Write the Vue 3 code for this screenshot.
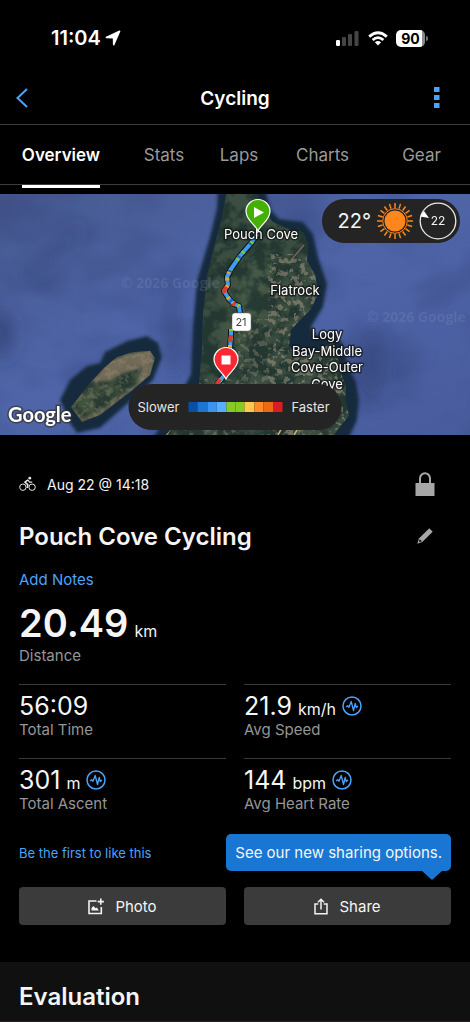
<script setup>
import { ref } from 'vue';

const tabs = ['Overview', 'Stats', 'Laps', 'Charts', 'Gear'];
const activeTab = ref('Overview');

const stats = [
  { value: '56:09', unit: '', label: 'Total Time', chart: false },
  { value: '21.9', unit: 'km/h', label: 'Avg Speed', chart: true },
  { value: '301', unit: 'm', label: 'Total Ascent', chart: true },
  { value: '144', unit: 'bpm', label: 'Avg Heart Rate', chart: true }
];

const paceClasses = ['p1', 'p2', 'p3', 'p4', 'p5', 'p5', 'p6', 'p7', 'p8', 'p9'];

const sunRays = Array.from({ length: 20 }, (_, i) => i * 18);

const routeNorth = 'M257 40 L252 48 L240 62 L231 75 L227 83 L228 91 L224 97 L229 105 L234 110 L239 112 L240 120';
const routeSouth = 'M231 135 L231 141 L230 155 L228 178 L222 184 L216 192';
</script>

<template>
  <div class="screen">
    <div class="status">
      <div class="clock">
        <span>11:04</span>
        <svg width="16" height="16" viewBox="0 0 16 16"><path d="M14.6 1.3 L8.7 14.6 L8.6 7.6 L1.4 7.4 Z" fill="#fff" stroke="#fff" stroke-width="1.6" stroke-linejoin="round" /></svg>
      </div>
      <div class="signals">
        <svg width="24" height="16" viewBox="0 0 24 16">
          <rect x="0" y="10" width="4" height="6" rx="1.3" fill="#fff" />
          <rect x="6" y="7" width="4" height="9" rx="1.3" fill="#454545" />
          <rect x="12" y="4" width="4" height="12" rx="1.3" fill="#454545" />
          <rect x="18.5" y="1" width="4" height="15" rx="1.3" fill="#454545" />
        </svg>
        <svg width="20" height="15" viewBox="0 0 20 15">
          <path d="M1.2 5.6 Q10 -2.2 18.8 5.6" fill="none" stroke="#fff" stroke-width="2.8" />
          <path d="M4.6 9 Q10 4.4 15.4 9" fill="none" stroke="#fff" stroke-width="2.7" />
          <path d="M6.9 11.3 Q10 8.8 13.1 11.3 L10 14.6 Z" fill="#fff" />
        </svg>
        <div class="battery"><span>90</span><i></i></div>
      </div>
    </div>

    <header class="header">
      <button class="icon-btn back" aria-label="Back">
        <svg width="12" height="20" viewBox="0 0 12 20"><path d="M11 1 L1.5 10 L11 19" fill="none" stroke="#4ba3fb" stroke-width="2" /></svg>
      </button>
      <h1>Cycling</h1>
      <button class="icon-btn more" aria-label="More options">
        <svg width="6" height="22" viewBox="0 0 6 22" fill="#4ba3fb">
          <rect x="0" y="0" width="5.5" height="5" />
          <rect x="0" y="8" width="5.5" height="5" />
          <rect x="0" y="16" width="5.5" height="5" />
        </svg>
      </button>
    </header>

    <nav class="tabs">
      <button
        v-for="tab in tabs"
        :key="tab"
        :class="{ active: tab === activeTab }"
        @click="activeTab = tab"
      ><span>{{ tab }}</span></button>
    </nav>

    <section class="map">
      <svg class="map-canvas" viewBox="0 0 470 241" preserveAspectRatio="xMidYMid slice">
        <defs>
          <linearGradient id="sea" x1="0" y1="0" x2="1" y2="1">
            <stop offset="0" stop-color="#46598f" />
            <stop offset=".45" stop-color="#4f65a8" />
            <stop offset="1" stop-color="#485c9d" />
          </linearGradient>
          <filter id="soft" x="-20%" y="-20%" width="140%" height="140%"><feGaussianBlur stdDeviation="1.6" /></filter>
          <filter id="softer" x="-40%" y="-40%" width="180%" height="180%"><feGaussianBlur stdDeviation="9" /></filter>
          <filter id="swell" x="0" y="0" width="100%" height="100%" color-interpolation-filters="sRGB">
            <feTurbulence type="fractalNoise" baseFrequency=".012 .02" numOctaves="3" seed="4" />
            <feColorMatrix values="0 0 0 0 .2  0 0 0 0 .26  0 0 0 0 .47  2 0 0 0 -.8" />
          </filter>
          <filter id="ground" x="0" y="0" width="100%" height="100%" color-interpolation-filters="sRGB">
            <feTurbulence type="fractalNoise" baseFrequency=".06" numOctaves="5" seed="8" />
            <feColorMatrix values="0 0 0 0 .1  0 0 0 0 .18  0 0 0 0 .17  5 0 0 0 -2" />
          </filter>
          <filter id="towns" x="0" y="0" width="100%" height="100%" color-interpolation-filters="sRGB">
            <feTurbulence type="fractalNoise" baseFrequency=".17" numOctaves="4" seed="21" />
            <feColorMatrix values="0 0 0 0 .66  0 0 0 0 .6  0 0 0 0 .52  0 9 0 0 -4.7" />
          </filter>
          <clipPath id="mainland">
            <path d="M226 0 L257 0 L262 14 L273 28 L291 36 L303 38 L308 50 L307 67 L315 80 L318 100 L311 115 L300 126 L291 136 L289 152 L297 163 L313 160 L333 148 L338 160 L340 177 L346 193 L345 206 L349 221 L340 233 L334 241 L166 241 L172 234 L188 204 L199 190 L202 155 L203 120 L207 82 L215 50 L222 24 Z" />
          </clipPath>
          <clipPath id="island">
            <path d="M71 213 L90 189 L105 173 L117 163 L133 158 L150 157 L155 164 L150 181 L130 198 L100 221 L82 228 L77 221 Z" />
          </clipPath>
        </defs>

        <rect width="470" height="241" fill="url(#sea)" />
        <rect width="470" height="241" filter="url(#swell)" opacity=".5" />
        <g filter="url(#softer)" fill="#2d3c70">
          <ellipse cx="172" cy="133" rx="8" ry="45" opacity=".5" />
          <ellipse cx="2" cy="140" rx="10" ry="24" opacity=".7" />
          <ellipse cx="50" cy="60" rx="42" ry="9" opacity=".4" transform="rotate(-40 50 60)" />
          <ellipse cx="372" cy="170" rx="12" ry="40" opacity=".4" />
        </g>

        <g filter="url(#soft)" fill="#122c3d">
          <path d="M218 -8 L264 -8 L271 16 L279 25 L303 28 L313 40 L318 63 L327 90 L323 113 L311 133 L315 141 L332 138 L343 150 L348 172 L356 188 L359 206 L357 226 L346 250 L150 250 L172 212 L187 188 L191 180 L193 133 L197 87 L210 43 L217 14 Z" />
          <path d="M60 206 L70 186 L87 172 L100 169 L105 158 L127 147 L147 142 L158 149 L162 163 L153 186 L128 209 L100 234 L77 239 L70 229 Z" />
        </g>

        <g clip-path="url(#mainland)">
          <rect x="150" width="220" height="241" fill="#3b4e41" />
          <ellipse cx="250" cy="105" rx="20" ry="55" fill="#50644c" opacity=".6" filter="url(#softer)" transform="rotate(25 250 105)" />
          <rect x="150" width="220" height="241" filter="url(#ground)" opacity=".7" />
          <rect x="268" y="60" width="90" height="181" filter="url(#towns)" opacity=".5" />
          <rect x="238" y="125" width="30" height="116" filter="url(#towns)" opacity=".35" />
          <rect x="150" y="185" width="88" height="56" filter="url(#towns)" opacity=".35" />
          <path d="M291 66 L304 51" stroke="#a5726a" stroke-width="1.5" opacity=".7" />
          <path d="M166 241 L180 222 M278 241 L285 228 M294 241 L302 228" stroke="#d6b568" stroke-width="1.5" />
        </g>
        <g clip-path="url(#island)">
          <rect x="60" y="140" width="110" height="100" fill="#41523e" />
          <rect x="60" y="140" width="110" height="100" filter="url(#ground)" opacity=".6" />
          <path d="M92 188 L110 166 L153 155 L154 180 L134 197 L142 174 L122 180 L108 187 Z" fill="#877764" opacity=".75" filter="url(#soft)" />
          <path d="M71 216 L82 226 L100 219 L135 193" fill="none" stroke="#81745e" stroke-width="4" opacity=".6" filter="url(#soft)" />
          <rect x="60" y="140" width="110" height="100" filter="url(#towns)" opacity=".25" />
        </g>

        <g class="watermark">
          <text x="121" y="94">© 2026 Google</text>
          <text x="367" y="128">© 2026 Google</text>
        </g>

        <g v-for="route in [routeNorth, routeSouth]" :key="route" fill="none" stroke-linejoin="round">
          <path :d="route" stroke="#101010" stroke-width="6" />
          <path :d="route" stroke="#3f9cf2" stroke-width="4" />
          <path :d="route" stroke="#83cc27" stroke-width="4" stroke-dasharray="2 7 2 11" />
          <path :d="route" stroke="#1566c0" stroke-width="4" stroke-dasharray="2 15" stroke-dashoffset="6" />
        </g>
        <g fill="none" stroke-width="4">
          <path d="M229 78 L227 83 L228 91 L224 97 L229 105 L234 110 L239 112" stroke="#f2a02c" stroke-dasharray="2 5" />
          <path d="M226 93 L224 97 L225 99 M233 109 L235 111 M231 141 L230 148 M220 185 L216 192" stroke="#e3362c" />
          <path d="M230 151 L229 168" stroke="#f5a43a" stroke-dasharray="2 4" />
        </g>

        <g class="place">
          <text x="261" y="45">Pouch Cove</text>
          <text x="295" y="101">Flatrock</text>
          <text x="327" y="145">Logy</text>
          <text x="327" y="162">Bay-Middle</text>
          <text x="327" y="178">Cove-Outer</text>
          <text x="327" y="195">Cove</text>
        </g>

        <rect x="232" y="119" width="19" height="18" rx="3" fill="#fff" stroke="#777" stroke-width=".5" />
        <text class="shield" x="241" y="132">21</text>

        <g stroke="#fff" stroke-width="1.2">
          <path d="M258 37 C255 30 246 26 246 17.5 A12 12 0 0 1 270 17.5 C270 26 261 30 258 37 Z" fill="#43b002" />
          <path d="M226 185 C223 178 214 174 214 165.5 A12 12 0 0 1 238 165.5 C238 174 229 178 226 185 Z" fill="#fb2731" />
        </g>
        <path d="M254 13 L264 18.5 L254 24 Z" fill="#fff" />
        <rect x="221.5" y="161.5" width="9" height="9" fill="#fff" />

        <text class="google" x="8" y="228">Google</text>
      </svg>

      <div class="weather">
        <span class="temp">22°</span>
        <svg width="38" height="38" viewBox="-19 -19 38 38">
          <circle r="10.5" fill="#ff861c" />
          <circle r="12.3" fill="none" stroke="#ff861c" stroke-width="1" />
          <path v-for="a in sunRays" :key="a" d="M0 -13 V-18" stroke="#ff861c" stroke-width="1.5" :transform="`rotate(${a})`" />
        </svg>
        <svg width="38" height="38" viewBox="-19 -19 38 38">
          <circle r="17.8" fill="none" stroke="#e8e8e8" stroke-width="1.3" />
          <path d="M-14 -10 L-9 -3 L-18 -4.5 Z" fill="#fff" />
          <text class="wind" x="0" y="4">22</text>
        </svg>
      </div>

      <div class="legend">
        <span>Slower</span>
        <div class="pace"><i v-for="(p, i) in paceClasses" :key="i" :class="p"></i></div>
        <span>Faster</span>
      </div>
    </section>

    <main class="content">
      <div class="date-row">
        <svg width="17" height="16" viewBox="0 0 17 16" fill="none" stroke="#e8e8e8">
          <circle cx="3.9" cy="11.2" r="3.2" stroke-width="1" />
          <circle cx="13.1" cy="11.2" r="3.2" stroke-width="1" />
          <circle cx="10.8" cy="2.2" r="1.4" fill="#e8e8e8" stroke="none" />
          <path d="M9.1 3.8 L5.9 6.2 L8.8 8.6 L8.3 12" stroke-width="1.5" stroke-linejoin="round" />
          <path d="M9 4 L10.5 6.1 H13.2" stroke-width="1.2" />
        </svg>
        <span>Aug 22 @ 14:18</span>
        <button class="icon-btn push" aria-label="Privacy">
          <svg width="20" height="24" viewBox="0 0 20 24"><path d="M5 11 V6.5 A5 5.3 0 0 1 15 6.5 V11" fill="none" stroke="#a6a6a6" stroke-width="2" /><rect x=".5" y="11" width="19" height="13" fill="#a6a6a6" /></svg>
        </button>
      </div>

      <div class="title-row">
        <h2>Pouch Cove Cycling</h2>
        <button class="icon-btn push pencil" aria-label="Edit name">
          <svg width="16" height="16" viewBox="0 0 16 16"><path d="M12.3 .3 L15.7 3.8 L5.3 14 L.3 15.7 L1.9 10.6 Z" fill="#a6a6a6" /><path d="M2.8 11.2 L4.9 13.2 L2.7 14 L2 13.3 Z" fill="#000" /></svg>
        </button>
      </div>

      <a class="notes" href="#">Add Notes</a>

      <div class="distance"><strong>20.49</strong><span>km</span></div>
      <div class="label">Distance</div>

      <div class="stats">
        <div v-for="s in stats" :key="s.label" class="stat">
          <div class="reading">
            <span class="value">{{ s.value }}</span>
            <span v-if="s.unit" class="unit">{{ s.unit }}</span>
            <button v-if="s.chart" class="icon-btn" :aria-label="s.label + ' chart'">
              <svg width="20" height="20" viewBox="0 0 20 20" fill="none" stroke="#4ba3fb"><circle cx="10" cy="10" r="9" stroke-width="1.5" /><path d="M4 11 L5.7 9.7 L7 11.2 L9.2 5.5 L11.5 14.5 L13.2 7.5 L14.3 11.5 L16 10" stroke-width="1.3" stroke-linejoin="round" /></svg>
            </button>
          </div>
          <div class="label">{{ s.label }}</div>
        </div>
      </div>

      <div class="social">
        <a href="#">Be the first to like this</a>
        <div class="tooltip">See our new sharing options.</div>
      </div>

      <div class="actions">
        <button>
          <svg width="16" height="17" viewBox="0 0 16 17" fill="none" stroke="#f2f2f2"><path d="M8.5 3 H1 V15.5 H13.3 V9" stroke-width="1.6" /><path d="M12.8 .5 V6.7 M9.7 3.6 H15.9" stroke-width="1.6" /><path d="M3.5 12.5 V10 L5.5 8 L7.5 10.3 L9 9.5 L10.8 12.5 Z" fill="#f2f2f2" stroke="none" /></svg>
          <span>Photo</span>
        </button>
        <button>
          <svg width="14" height="17" viewBox="0 0 14 17" fill="none" stroke="#f2f2f2" stroke-width="1.5"><path d="M4.3 6 H1 V15.8 H13 V6 H9.7" /><path d="M7 11.5 V1.5 M3.9 4.3 L7 1.3 L10.1 4.3" /></svg>
          <span>Share</span>
        </button>
      </div>
    </main>

    <section class="evaluation">
      <h2>Evaluation</h2>
    </section>
  </div>
</template>

<style>
body {
  margin: 0;
  background: #000;
}
</style>

<style scoped>
.screen {
  min-height: 100vh;
  display: flex;
  flex-direction: column;
  background: #000;
  color: #f5f5f5;
  font-family: Inter, "Liberation Sans", sans-serif;
}

h1,
h2 {
  margin: 0;
  font-weight: 600;
}

button {
  border: 0;
  padding: 0;
  background: none;
  color: inherit;
  font: inherit;
  cursor: pointer;
}

a {
  color: #4ba3fb;
  text-decoration: none;
}

svg {
  display: block;
  flex: none;
}

.status {
  display: flex;
  align-items: center;
  justify-content: space-between;
  height: 52px;
  padding: 12px 42px 8px 51px;
}

.clock {
  display: flex;
  align-items: center;
  gap: 4px;
  font-size: 20px;
  font-weight: 600;
  color: #fff;
}

.signals {
  display: flex;
  align-items: center;
  gap: 8px;
}

.battery {
  display: flex;
  align-items: center;
  gap: 1px;
}

.battery span {
  width: 29px;
  border-radius: 5px;
  background: linear-gradient(90deg, #fff 90%, #8a8a8a 90%);
  color: #000;
  font-size: 14px;
  font-weight: 700;
  line-height: 17px;
  text-align: center;
}

.battery i {
  width: 2px;
  height: 5px;
  border-radius: 0 2px 2px 0;
  background: #777;
}

.header {
  display: grid;
  grid-template-columns: 40px 1fr 40px;
  align-items: center;
  height: 52px;
  padding: 0 16px;
  border-bottom: 1px solid #3c3c3c;
}

.header h1 {
  font-size: 19px;
  text-align: center;
  color: #fff;
}

.icon-btn {
  display: flex;
}

.back {
  justify-self: start;
}

.more {
  justify-self: end;
  padding-right: 14px;
}

.tabs {
  display: grid;
  grid-template-columns: 122fr 84fr 66fr 101fr 97fr;
  height: 59px;
  margin-bottom: 9px;
  border-bottom: 1px solid #3c3c3c;
}

.tabs button {
  display: flex;
  justify-content: center;
  color: #9a9a9a;
  font-size: 17px;
}

.tabs span {
  height: 100%;
  line-height: 60px;
  box-sizing: border-box;
}

.tabs .active {
  color: #fff;
  font-weight: 600;
}

.tabs .active span {
  border-bottom: 3px solid #fff;
}

.map {
  position: relative;
  height: 241px;
  overflow: hidden;
}

.map-canvas {
  width: 100%;
  height: 100%;
}

.place {
  fill: #fff;
  stroke: #111a;
  stroke-width: 3px;
  stroke-linejoin: round;
  paint-order: stroke;
  font-size: 13px;
  text-anchor: middle;
}

.shield {
  fill: #444;
  font-size: 11px;
  text-anchor: middle;
}

.google {
  fill: #fff;
  stroke: #333b;
  stroke-width: 3px;
  paint-order: stroke;
  font-family: Lato, sans-serif;
  font-size: 20px;
  font-weight: 700;
}

.watermark {
  fill: #8fa0cc;
  opacity: .2;
  font-family: "Open Sans", sans-serif;
  font-size: 14px;
  font-weight: 700;
}

.weather {
  position: absolute;
  top: 5px;
  right: 10px;
  display: flex;
  align-items: center;
  gap: 5px;
  height: 44px;
  padding: 0 3px 0 15px;
  border-radius: 22px;
  background: #242424;
}

.temp {
  font-size: 20px;
}

.wind {
  fill: #f2f2f2;
  font-size: 12px;
  text-anchor: middle;
}

.legend {
  position: absolute;
  bottom: 5px;
  left: 50%;
  display: flex;
  align-items: center;
  gap: 9px;
  height: 46px;
  padding: 0 12px 0 9px;
  border-radius: 23px;
  background: #242424;
  color: #e4e4e4;
  font-size: 13px;
  transform: translateX(-50%);
}

.pace {
  display: flex;
  width: 94px;
  height: 10px;
}

.pace i {
  flex: 1;
}

.p1 { background: #0a4fa6; }
.p2 { background: #1b76d3; }
.p3 { background: #3a94f4; }
.p4 { background: #58adff; }
.p5 { background: #85cb22; }
.p6 { background: #ffc84c; }
.p7 { background: #fc8b28; }
.p8 { background: #ec6b12; }
.p9 { background: #d91f24; }

.content {
  padding: 36px 19px 37px;
}

.date-row,
.title-row {
  display: flex;
  align-items: center;
}

.date-row {
  gap: 11px;
  height: 26px;
  font-size: 14px;
}

.push {
  margin-left: auto;
}

.date-row .push {
  margin-right: 16px;
}

.title-row {
  height: 34px;
  margin-top: 22px;
}

.title-row h2 {
  font-size: 24px;
}

.pencil {
  margin-right: 18px;
}

.notes {
  display: block;
  margin-top: 17px;
  font-size: 15px;
  line-height: 20px;
}

.distance {
  display: flex;
  align-items: baseline;
  gap: 6px;
  height: 46px;
  margin-top: 10px;
  line-height: 46px;
}

.distance strong {
  font-size: 38px;
  font-weight: 600;
}

.distance span {
  font-size: 16px;
}

.label {
  color: #969696;
  font-size: 15px;
  line-height: 20px;
}

.stats {
  display: grid;
  grid-template-columns: 1fr 1fr;
  column-gap: 18px;
  margin-top: 18px;
}

.stat {
  height: 73px;
  border-top: 1px solid #3a3a3a;
}

.reading {
  display: flex;
  align-items: baseline;
  gap: 6px;
  height: 35px;
  line-height: 42px;
}

.reading .icon-btn {
  align-self: center;
  margin-top: 6px;
}

.value {
  font-size: 25px;
}

.unit {
  font-size: 16px;
}

.social {
  display: flex;
  align-items: center;
  justify-content: space-between;
  margin-top: 2px;
  font-size: 13px;
}

.tooltip {
  position: relative;
  padding: 0 9px;
  border-radius: 5px;
  background: #1976d2;
  color: #f5f5f5;
  font-size: 15px;
  line-height: 37px;
}

.tooltip::after {
  content: "";
  position: absolute;
  top: 100%;
  right: 9px;
  border: 10px solid transparent;
  border-top: 9px solid #1976d2;
  border-bottom: 0;
}

.actions {
  display: grid;
  grid-template-columns: 1fr 1fr;
  gap: 18px;
  margin-top: 16px;
}

.actions button {
  display: flex;
  align-items: center;
  justify-content: center;
  gap: 11px;
  height: 38px;
  border-radius: 4px;
  background: #3b3b3b;
  font-size: 15px;
}

.evaluation {
  flex: 1;
  padding: 19px 19px 9px;
  border-bottom: 1px solid #2a2224;
  background: #101010;
}

.evaluation h2 {
  font-size: 24px;
  line-height: 31px;
}
</style>
